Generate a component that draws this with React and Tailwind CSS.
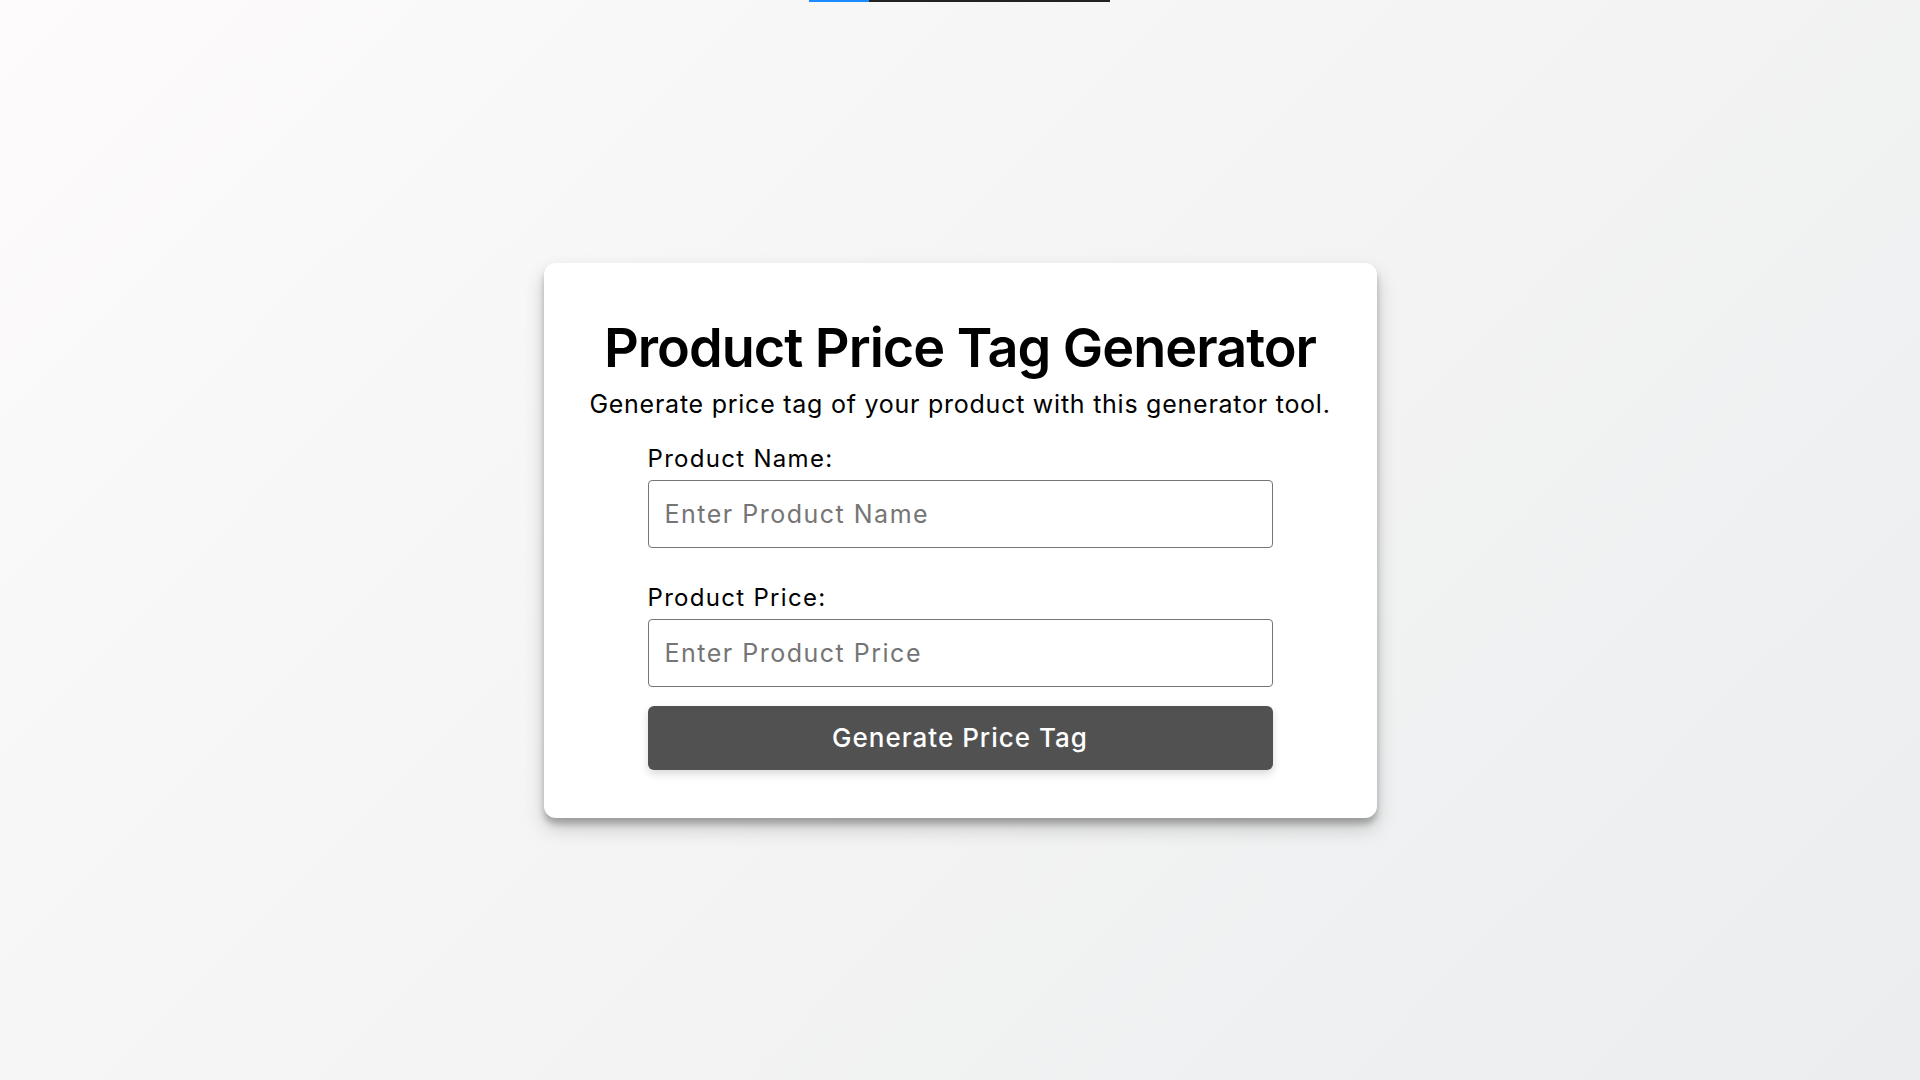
import React from "react";

export default function App() {
  const font = { fontFamily: "Inter, 'Open Sans', sans-serif" };
  return (
    <div
      className="relative w-full h-screen overflow-hidden bg-[linear-gradient(135deg,#fdfbfb_0%,#ebedee_100%)] flex items-center justify-center"
      style={font}
    >
      <div className="absolute top-0 left-[809px] flex h-[2px]">
        <div className="w-[60px] h-full bg-[#1a8cff]" />
        <div className="w-[241px] h-full bg-[#222222]" />
      </div>

      <div className="w-[833px] h-[555px] bg-white rounded-[12px] shadow-[0_10px_20px_rgba(0,0,0,0.19),0_6px_6px_rgba(0,0,0,0.23)] flex flex-col items-center pt-[53px]">
        <h1 className="text-[54px] leading-[64px] font-semibold text-black tracking-[-1px]">
          Product Price Tag Generator
        </h1>
        <p className="mt-[8px] text-[25px] leading-[32px] text-black tracking-[0.75px]">
          Generate price tag of your product with this generator tool.
        </p>
        <div className="w-[625px] mt-[25px] flex flex-col">
          <label className="text-[24px] leading-[28px] text-black tracking-[1.3px]">Product Name:</label>
          <input
            type="text"
            placeholder="Enter Product Name"
            className="mt-[7px] h-[68px] w-full border border-[#767676] rounded-[4px] px-[16px] text-[25px] tracking-[1.5px] text-black placeholder:text-[#757575] outline-none"
          />
          <label className="mt-[36px] text-[24px] leading-[28px] text-black tracking-[1.3px]">Product Price:</label>
          <input
            type="text"
            placeholder="Enter Product Price"
            className="mt-[7px] h-[68px] w-full border border-[#767676] rounded-[4px] px-[16px] text-[25px] tracking-[1.5px] text-black placeholder:text-[#757575] outline-none"
          />
          <button className="mt-[19px] h-[64px] w-full bg-[#515151] rounded-[6px] text-white text-[26px] tracking-[1px] font-medium shadow-[0_4px_8px_rgba(0,0,0,0.15)]">
            Generate Price Tag
          </button>
        </div>
      </div>
    </div>
  );
}
